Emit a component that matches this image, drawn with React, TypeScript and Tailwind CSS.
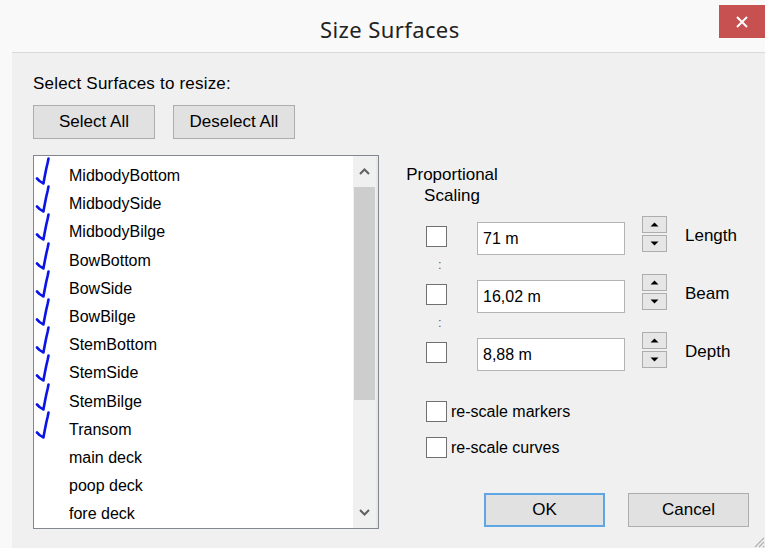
import React from "react";

const surfaces: { name: string; checked: boolean }[] = [
  { name: "MidbodyBottom", checked: true },
  { name: "MidbodySide", checked: true },
  { name: "MidbodyBilge", checked: true },
  { name: "BowBottom", checked: true },
  { name: "BowSide", checked: true },
  { name: "BowBilge", checked: true },
  { name: "StemBottom", checked: true },
  { name: "StemSide", checked: true },
  { name: "StemBilge", checked: true },
  { name: "Transom", checked: true },
  { name: "main deck", checked: false },
  { name: "poop deck", checked: false },
  { name: "fore deck", checked: false },
];

const dims = [
  { value: "71 m", label: "Length" },
  { value: "16,02 m", label: "Beam" },
  { value: "8,88 m", label: "Depth" },
];

function Tick() {
  return (
    <svg width="16" height="30" viewBox="0 0 16 30" className="shrink-0 -mt-[5px]">
      <path
        d="M13.5 1.5 L12.6 6 L11.2 12 L10 18 L8.4 26.5 M2 21.5 L4.5 24 L8.4 26.5"
        fill="none"
        stroke="#0a14e6"
        strokeWidth="2.6"
        strokeLinecap="round"
        strokeLinejoin="round"
      />
    </svg>
  );
}

function Box() {
  return <div className="w-[21px] h-[21px] shrink-0 border border-[#707070] bg-white" />;
}

function Spinner() {
  return (
    <div className="w-[25px] h-[36px] shrink-0 flex flex-col justify-between">
      <div className="h-[17px] border border-[#adadad] bg-[#e6e6e6] flex items-center justify-center">
        <svg width="9" height="5" viewBox="0 0 9 5">
          <path d="M0.5 4.5 L4.5 0.5 L8.5 4.5 Z" fill="#000" />
        </svg>
      </div>
      <div className="h-[17px] border border-[#adadad] bg-[#e6e6e6] flex items-center justify-center">
        <svg width="9" height="5" viewBox="0 0 9 5">
          <path d="M0.5 0.5 L4.5 4.5 L8.5 0.5 Z" fill="#000" />
        </svg>
      </div>
    </div>
  );
}

export default function App() {
  const ui = { fontFamily: '"Liberation Sans", Arial, sans-serif' };
  return (
    <div
      className="w-[765px] h-[548px] bg-[#f9f9f9] flex flex-col overflow-hidden relative text-black"
      style={ui}
    >
      {/* caption bar */}
      <div className="h-[52px] shrink-0 flex items-start">
        <div
          className="pl-[320px] pt-[13px] text-[22px] tracking-[0.4px] leading-[32px] text-[#222]"
          style={{ fontFamily: '"Noto Sans", "Open Sans", sans-serif' }}
        >
          Size Surfaces
        </div>
        <div className="ml-auto mt-[5px] w-[46px] h-[33px] bg-[#c75050] flex items-center justify-center">
          <svg width="12" height="12" viewBox="0 0 12 12">
            <path d="M1 1 L11 11 M11 1 L1 11" stroke="#fff" strokeWidth="2" />
          </svg>
        </div>
      </div>

      {/* client area */}
      <div className="flex-1 ml-[12px] bg-[#f0f0f0] border-t border-[#dadada] flex">
        {/* surface list column */}
        <div className="pl-[21px] flex flex-col">
          <div className="mt-[21px] text-[17px] leading-[20px] tracking-[0.2px]">Select Surfaces to resize:</div>
          <div className="mt-[11px] flex gap-[18px]">
            <div className="w-[122px] h-[34px] border border-[#adadad] bg-[#e1e1e1] flex items-center justify-center text-[17px]">
              Select All
            </div>
            <div className="w-[122px] h-[34px] border border-[#adadad] bg-[#e1e1e1] flex items-center justify-center text-[17px]">
              Deselect All
            </div>
          </div>
          <div className="mt-[16px] w-[346px] h-[374px] border border-[#828790] bg-white flex">
            <div className="flex-1 pt-[6px] overflow-hidden">
              {surfaces.map((s) => (
                <div key={s.name} className="h-[28.2px] flex items-start">
                  <div className="w-[35px] pl-[1px] shrink-0 flex">{s.checked ? <Tick /> : null}</div>
                  <div className="text-[16px] leading-[28px]">{s.name}</div>
                </div>
              ))}
            </div>
            <div className="w-[25px] bg-[#f0f0f0] flex flex-col border-r-2 border-[#e8e8e8]">
              <div className="h-[31px] flex items-center justify-center">
                <svg width="11" height="7" viewBox="0 0 11 7">
                  <path d="M1 6 L5.5 1.5 L10 6" fill="none" stroke="#606060" strokeWidth="2" />
                </svg>
              </div>
              <div className="h-[213px] mx-[1px] bg-[#cdcdcd]" />
              <div className="flex-1" />
              <div className="h-[31px] flex items-center justify-center">
                <svg width="11" height="7" viewBox="0 0 11 7">
                  <path d="M1 1 L5.5 5.5 L10 1" fill="none" stroke="#606060" strokeWidth="2" />
                </svg>
              </div>
            </div>
          </div>
        </div>

        {/* scaling column */}
        <div className="ml-[27px] pt-[111px] flex flex-col">
          <div className="w-[92px] text-center text-[17px] leading-[21px]">
            Proportional
            <br />
            Scaling
          </div>
          <div className="mt-[10px] flex flex-col">
            {dims.map((d, i) => (
              <div key={d.label} className="flex flex-col">
                <div className="h-[40px] flex items-start pl-[20px]">
                  <div className="mt-[10px]">
                    <Box />
                  </div>
                  <div className="ml-[30px] mt-[6px] w-[148px] h-[33px] border border-[#b4b4b4] bg-white pl-[5px] flex items-center text-[16px]">
                    {d.value}
                  </div>
                  <div className="ml-[17px]">
                    <Spinner />
                  </div>
                  <div className="ml-[18px] mt-[10px] text-[17px] leading-[20px]">{d.label}</div>
                </div>
                {i < dims.length - 1 ? (
                  <div className="h-[18px] pl-[32px] text-[13px] leading-[18px] text-[#6a5a6a]">:</div>
                ) : null}
              </div>
            ))}
          </div>
          <div className="mt-[29px] pl-[20px] flex items-center h-[21px]">
            <Box />
            <div className="ml-[4px] text-[16px] leading-[20px]">re-scale markers</div>
          </div>
          <div className="mt-[15px] pl-[20px] flex items-center h-[21px]">
            <Box />
            <div className="ml-[4px] text-[16px] leading-[20px]">re-scale curves</div>
          </div>
          <div className="mt-[35px] pl-[78px] flex gap-[23px]">
            <div className="w-[121px] h-[34px] border-2 border-[#5ea6e4] bg-[#e1e1e1] flex items-center justify-center text-[17px]">
              OK
            </div>
            <div className="w-[121px] h-[34px] border border-[#adadad] bg-[#e1e1e1] flex items-center justify-center text-[17px]">
              Cancel
            </div>
          </div>
        </div>
      </div>

      {/* size grip */}
      <svg width="13" height="13" viewBox="0 0 13 13" className="absolute right-0 bottom-0">
        <path d="M12 3 L3 12 M12 7 L7 12 M12 11 L11 12" stroke="#b0b0b0" strokeWidth="1.2" />
      </svg>
    </div>
  );
}
